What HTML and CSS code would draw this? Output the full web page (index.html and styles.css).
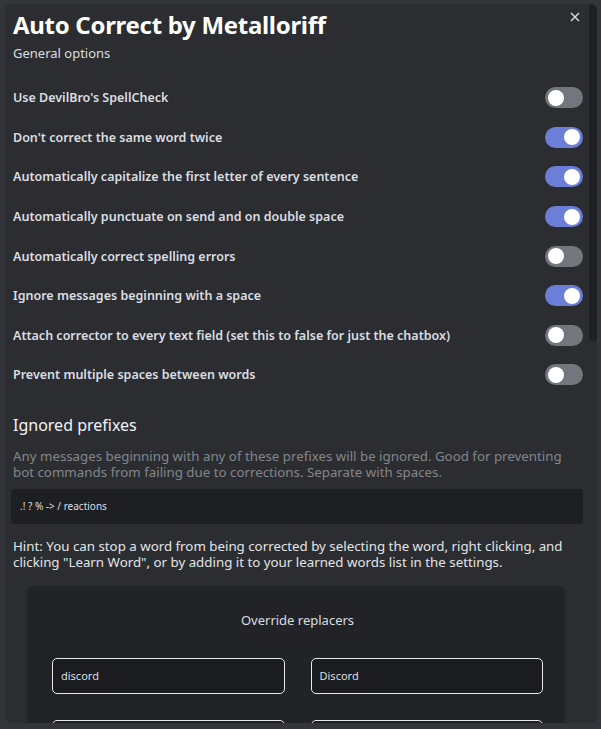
FILE: index.html
```html
<!DOCTYPE html>
<html>
<head>
<meta charset="utf-8">
<link rel="stylesheet" href="styles.css">
</head>
<body>
<div class="modal">
  <div class="scrollthumb"></div>
  <button class="close" aria-label="Close">
    <svg width="10" height="10" viewBox="0 0 10 10"><path d="M1 1L9 9M9 1L1 9" stroke="#dbdee1" stroke-width="1.4" fill="none"/></svg>
  </button>
  <div class="content">
    <h1 class="title">Auto Correct by Metalloriff</h1>
    <div class="subtitle">General options</div>
    <div class="rows">
      <div class="row"><span class="label">Use DevilBro's SpellCheck</span><span class="toggle"></span></div>
      <div class="row"><span class="label">Don't correct the same word twice</span><span class="toggle on"></span></div>
      <div class="row"><span class="label">Automatically capitalize the first letter of every sentence</span><span class="toggle on"></span></div>
      <div class="row"><span class="label">Automatically punctuate on send and on double space</span><span class="toggle on"></span></div>
      <div class="row"><span class="label">Automatically correct spelling errors</span><span class="toggle"></span></div>
      <div class="row"><span class="label">Ignore messages beginning with a space</span><span class="toggle on"></span></div>
      <div class="row"><span class="label">Attach corrector to every text field (set this to false for just the chatbox)</span><span class="toggle"></span></div>
      <div class="row"><span class="label">Prevent multiple spaces between words</span><span class="toggle"></span></div>
    </div>
    <h2 class="section">Ignored prefixes</h2>
    <p class="desc">Any messages beginning with any of these prefixes will be ignored. Good for preventing bot commands from failing due to corrections. Separate with spaces.</p>
    <div class="textbox">.! ? % -&gt; / reactions</div>
    <p class="hint">Hint: You can stop a word from being corrected by selecting the word, right clicking, and clicking "Learn Word", or by adding it to your learned words list in the settings.</p>
    <div class="panel">
      <div class="panel-title">Override replacers</div>
      <div class="pairs">
        <div class="field">discord</div>
        <div class="field">Discord</div>
        <div class="field"></div>
        <div class="field"></div>
      </div>
    </div>
  </div>
</div>
</body>
</html>
```
FILE: styles.css
```css
* { box-sizing: border-box; }
html, body { margin: 0; padding: 0; }
body {
  background: #33353b;
  width: 601px;
  height: 729px;
  overflow: hidden;
  font-family: "Noto Sans", "Open Sans", sans-serif;
  padding: 4px 4px 6px 5px;
}
.modal {
  position: relative;
  height: 719px;
  background: #2b2d31;
  border-radius: 6px;
  overflow: hidden;
}
.scrollthumb {
  position: absolute;
  right: 0;
  top: 0;
  width: 8px;
  height: 337px;
  background: #1f2023;
  border-radius: 4px;
}
.close {
  position: absolute;
  top: 5px;
  right: 14px;
  width: 16px;
  height: 16px;
  padding: 0;
  border: 0;
  background: transparent;
  display: flex;
  align-items: center;
  justify-content: center;
}
.content {
  padding: 6px 14px 0 8px;
}
.title {
  margin: 0;
  font-size: 24px;
  line-height: 30px;
  font-weight: 700;
  color: #ffffff;
  letter-spacing: -0.3px;
}
.subtitle {
  margin-top: 4px;
  font-size: 13px;
  line-height: 18px;
  color: #dbdee1;
}
.rows {
  margin-top: 16px;
  display: flex;
  flex-direction: column;
}
.row {
  height: 39.6px;
  display: flex;
  align-items: center;
  justify-content: space-between;
}
.label {
  font-size: 12.5px;
  font-weight: 600;
  color: #dbdee1;
}
.toggle {
  position: relative;
  width: 38px;
  height: 21px;
  border-radius: 11px;
  background: #72767d;
  flex: none;
}
.toggle::after {
  content: "";
  position: absolute;
  top: 2.5px;
  left: 3px;
  width: 16px;
  height: 16px;
  border-radius: 50%;
  background: #ffffff;
}
.toggle.on { background: #6b7ed8; }
.toggle.on::after { left: auto; right: 3px; }
.section {
  margin: 20px 0 0;
  font-size: 16px;
  line-height: 20px;
  font-weight: 400;
  color: #f2f3f5;
}
.desc {
  margin: 13px 0 0;
  font-size: 13.3px;
  line-height: 16px;
  color: #84868b;
}
.textbox {
  margin: 9px 0 0 -2px;
  height: 35px;
  background: #1e1f22;
  border-radius: 4px;
  display: flex;
  align-items: center;
  padding-left: 9px;
  font-size: 10px;
  color: #dbdee1;
}
.hint {
  margin: 14px 0 0;
  font-size: 13.3px;
  line-height: 16px;
  color: #e3e5e8;
}
.panel {
  margin: 16px 18px 0 14px;
  background: #222327;
  border-radius: 6px;
  padding: 24px 22px 0 25px;
  height: 200px;
}
.panel-title {
  text-align: center;
  font-size: 13px;
  line-height: 20px;
  color: #dbdee1;
}
.pairs {
  margin-top: 28px;
  display: grid;
  grid-template-columns: 1fr 1fr;
  column-gap: 26px;
  row-gap: 26px;
}
.field {
  height: 36px;
  border: 1px solid #e8e8e8;
  border-radius: 5px;
  background: #1b1c1f;
  display: flex;
  align-items: center;
  padding-left: 8px;
  font-size: 11px;
  color: #dbdee1;
}
```
